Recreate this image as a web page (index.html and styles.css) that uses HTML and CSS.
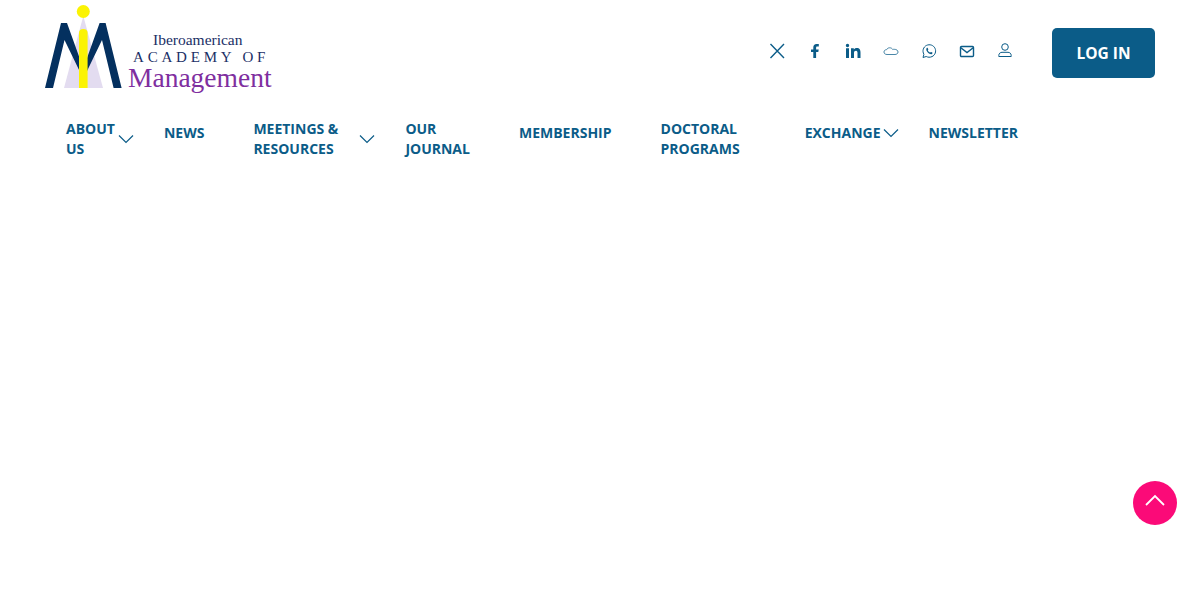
FILE: index.html
```html
<!DOCTYPE html>
<html lang="en">
<head>
  <meta charset="UTF-8" />
  <title>Iberoamerican Academy of Management</title>
  <link rel="stylesheet" href="styles.css">
</head>
<body>
  <header class="site-header">
    <div class="top-row">
      <a class="logo" href="#">
        <svg width="228" height="96" viewBox="0 0 228 96">
          <polygon points="38.300,16 58,88 19,88" fill="#e3dcf0" />
          <path d="M0,88 L16,23 H22 L36,62 V74 L19.500,40 L8,88 Z" fill="#04305f" />
          <path d="M76.600,88 L60.600,23 H54.600 L40.600,62 V74 L57,40 L68.600,88 Z" fill="#04305f" />
          <circle cx="38.300" cy="11.500" r="6.500" fill="#fbf304" />
          <path d="M34,33 Q34,29 38.300,29 Q42.600,29 42.600,33 V88 H34 Z" fill="#fbf304" />
          <text x="108" y="45" class="logo-line1">Iberoamerican</text>
          <text x="88" y="62" class="logo-line2">ACADEMY OF</text>
          <text x="83" y="87" class="logo-line3">Management</text>
        </svg>
      </a>
      <div class="top-right">
        <div class="socials">
          <a href="#"><svg width="16" height="16" viewBox="0 0 16 16"><path d="M1.500,1 L15,15 M15,1 L1.500,15" class="line" /></svg></a>
          <a href="#"><svg width="16" height="16" viewBox="0 0 16 16"><path d="M6.300,15 V9 H4 V6.400 H6.300 V4.600 C6.300,2.200 7.500,1 9.500,1 H11.800 V3.600 H10.300 C9.400,3.600 9.100,4.100 9.100,4.900 V6.400 H11.700 L11.300,9 H9.100 V15 Z" class="solid" /></svg></a>
          <a href="#"><svg width="16" height="16" viewBox="0 0 16 16"><path d="M1,5.300 H4 V15 H1 Z M2.500,0.800 A1.700,1.700 0 1 1 2.500,4.200 A1.700,1.700 0 1 1 2.500,0.800 Z M6,5.300 H8.800 V6.600 C9.300,5.700 10.400,5 11.800,5 C14.700,5 15.500,6.800 15.500,9.500 V15 H12.500 V10 C12.500,8.700 12.200,7.700 11,7.700 C9.700,7.700 9,8.600 9,10 V15 H6 Z" class="solid" /></svg></a>
          <a href="#"><svg width="16" height="16" viewBox="0 0 16 16"><path d="M4,11.500 C2,11.500 1,10.400 1,9 C1,7.600 2.100,6.600 3.600,6.700 C4.200,5.300 5.500,4.700 6.800,4.800 C8.100,4.800 9.200,5.500 9.700,6.500 C10.100,6.300 10.600,6.300 11.200,6.300 C13.500,6.300 15,7.400 15,9 C15,10.500 13.700,11.500 12,11.500 Z" class="line thin muted" /></svg></a>
          <a href="#"><svg width="16" height="16" viewBox="0 0 16 16"><path d="M2,14.500 L2.900,11.300 C1,8 2.300,4 5.500,2.400 C8.700,0.900 12.500,2.100 14,5.300 C15.500,8.500 14.100,12.200 11,13.600 C9,14.500 7,14.400 5.200,13.500 Z" class="line thin" /><path d="M5.700,5 C6,4.600 6.500,4.600 6.700,5 L7.300,6.300 C7.400,6.600 7,7 6.800,7.400 C7.300,8.400 8.300,9.300 9.100,9.600 C9.500,9.300 9.800,8.800 10.100,8.900 L11.300,9.500 C11.700,9.700 11.500,10.500 11,10.900 C10,11.500 8.200,10.900 6.800,9.500 C5.400,8.100 4.800,6.100 5.700,5 Z" class="solid" /></svg></a>
          <a href="#"><svg width="16" height="16" viewBox="0 0 16 16"><rect x="1.500" y="3.500" width="13" height="10" rx="1" class="line" /><path d="M1.500,4.500 L8,9.500 L14.500,4.500" class="line" /></svg></a>
          <a href="#"><svg width="16" height="16" viewBox="0 0 16 16"><circle cx="8" cy="4" r="3.300" class="line thin" /><path d="M1.800,13.500 V12.500 C1.800,10.500 3.300,9.300 5,9.300 H11 C12.700,9.300 14.200,10.500 14.200,12.500 V13.500 Z" class="line thin" /></svg></a>
        </div>
        <a class="login-btn" href="#">LOG IN</a>
      </div>
    </div>
    <nav class="main-nav">
      <div class="nav-item has-sub">
        <a href="#">ABOUT<br>US</a>
        <svg class="chevron" width="16" height="10" viewBox="0 0 16 10"><path d="M1,1.500 L8,8.500 L15,1.500" /></svg>
      </div>
      <div class="nav-item single"><a href="#">NEWS</a></div>
      <div class="nav-item has-sub">
        <a href="#">MEETINGS &amp;<br>RESOURCES</a>
        <svg class="chevron wide-gap" width="16" height="10" viewBox="0 0 16 10"><path d="M1,1.500 L8,8.500 L15,1.500" /></svg>
      </div>
      <div class="nav-item"><a href="#">OUR<br>JOURNAL</a></div>
      <div class="nav-item single"><a href="#">MEMBERSHIP</a></div>
      <div class="nav-item doctoral"><a href="#">DOCTORAL<br>PROGRAMS</a></div>
      <div class="nav-item has-sub single-sub">
        <a href="#">EXCHANGE</a>
        <svg class="chevron" width="16" height="10" viewBox="0 0 16 10"><path d="M1,1.500 L8,8.500 L15,1.500" /></svg>
      </div>
      <div class="nav-item single"><a href="#">NEWSLETTER</a></div>
    </nav>
  </header>

  <a class="to-top" href="#">
    <svg width="20" height="12" viewBox="0 0 20 12"><path d="M1,11 L10,2 L19,11" /></svg>
  </a>
</body>
</html>
```

FILE: styles.css
```css
* {
  box-sizing: border-box;
}
body {
  margin: 0;
  background: #fff;
  font-family: "Open Sans", sans-serif;
  color: #0b5c88;
  overflow: hidden;
}
a {
  color: inherit;
  text-decoration: none;
}
.site-header {
  padding: 0 45px;
}
.top-row {
  display: flex;
  justify-content: space-between;
  align-items: flex-start;
  height: 119px;
}
.logo {
  display: block;
  width: 228px;
}
.logo svg {
  display: block;
}
.logo-line1 {
  font-family: "Liberation Serif", serif;
  font-size: 15.500px;
  fill: #1a2f66;
}
.logo-line2 {
  font-family: "Liberation Serif", serif;
  font-size: 15px;
  letter-spacing: 3.800px;
  fill: #1a2f66;
}
.logo-line3 {
  font-family: "Liberation Serif", serif;
  font-size: 27.500px;
  fill: #7f2f9f;
}
.top-right {
  display: flex;
  align-items: center;
  margin-top: 28px;
}
.socials {
  display: flex;
  gap: 22px;
  margin-right: 39px;
  margin-top: -4px;
}
.socials a {
  display: block;
  width: 16px;
  height: 16px;
}
.socials svg {
  display: block;
}
.line {
  fill: none;
  stroke: #0b5c88;
  stroke-width: 1.400;
}
.line.thin {
  stroke-width: 1;
}
.line.muted {
  stroke: #4a87a8;
}
.solid {
  fill: #0b5c88;
}
.login-btn {
  display: flex;
  align-items: center;
  justify-content: center;
  width: 103px;
  height: 50px;
  background: #0b5c88;
  color: #fff;
  border-radius: 5px;
  font-weight: 700;
  font-size: 15.500px;
}
.main-nav {
  display: flex;
  align-items: flex-start;
  padding-left: 21px;
}
.nav-item {
  display: flex;
  align-items: flex-start;
  font-size: 14px;
  font-weight: 700;
  line-height: 20px;
  margin-right: 49px;
  white-space: nowrap;
}
.nav-item.single {
  margin-top: 4px;
}
.nav-item.has-sub {
  margin-right: 30px;
}
.nav-item.doctoral {
  margin-right: 65px;
}
.nav-item.single-sub {
  margin-top: 4px;
}
.chevron {
  display: block;
  margin-left: 3px;
  margin-top: 15px;
}
.chevron path {
  fill: none;
  stroke: #0b5c88;
  stroke-width: 1.200;
}
.chevron.wide-gap {
  margin-left: 21px;
}
.single-sub .chevron {
  margin-left: 2px;
  margin-top: 5px;
}
.to-top {
  position: fixed;
  left: 1133px;
  top: 481px;
  width: 44px;
  height: 44px;
  border-radius: 50%;
  background: #fb0a78;
  display: flex;
  align-items: center;
  justify-content: center;
}
.to-top svg {
  margin-top: -6px;
}
.to-top path {
  fill: none;
  stroke: #fff;
  stroke-width: 1.800;
}
```
